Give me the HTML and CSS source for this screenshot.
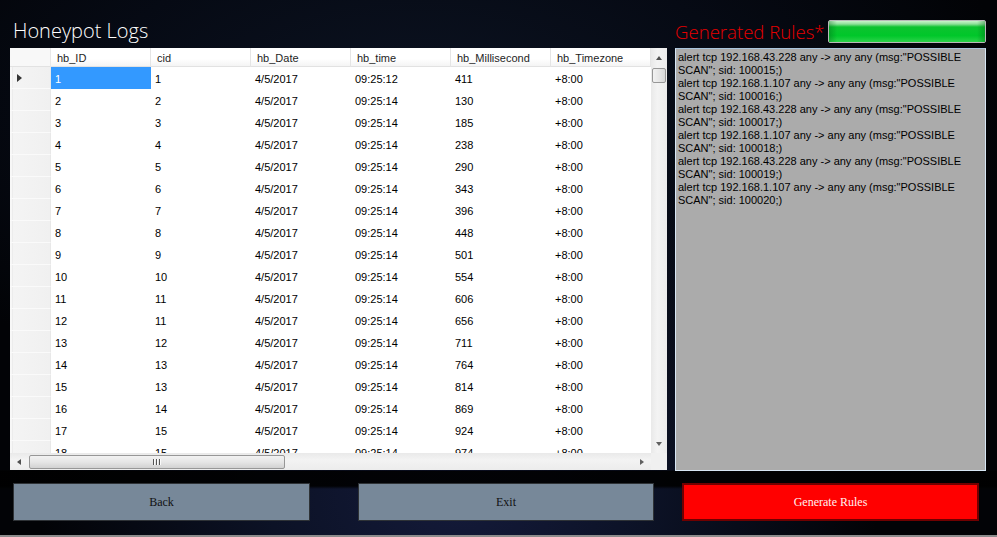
FILE: index.html
```html
<!DOCTYPE html>
<html>
<head>
<meta charset="utf-8">
<link rel="stylesheet" href="styles.css">
</head>
<body>
<div class="app">
  <div class="top">
    <div class="title">Honeypot Logs</div>
    <div class="rules-head">
      <div class="rules-title">Generated Rules*</div>
      <div class="progress"><div class="progress-fill"></div></div>
    </div>
  </div>
  <div class="main">
    <div class="grid">
      <div class="view">
        <div class="row head">
          <div class="rh"></div>
          <div class="c">hb_ID</div><div class="c">cid</div><div class="c">hb_Date</div><div class="c">hb_time</div><div class="c">hb_Millisecond</div><div class="c">hb_Timezone</div>
        </div>
        <div class="row"><div class="rh cur"><span class="tri"></span></div><div class="c sel">1</div><div class="c">1</div><div class="c">4/5/2017</div><div class="c">09:25:12</div><div class="c">411</div><div class="c">+8:00</div></div>
        <div class="row"><div class="rh"></div><div class="c">2</div><div class="c">2</div><div class="c">4/5/2017</div><div class="c">09:25:14</div><div class="c">130</div><div class="c">+8:00</div></div>
        <div class="row"><div class="rh"></div><div class="c">3</div><div class="c">3</div><div class="c">4/5/2017</div><div class="c">09:25:14</div><div class="c">185</div><div class="c">+8:00</div></div>
        <div class="row"><div class="rh"></div><div class="c">4</div><div class="c">4</div><div class="c">4/5/2017</div><div class="c">09:25:14</div><div class="c">238</div><div class="c">+8:00</div></div>
        <div class="row"><div class="rh"></div><div class="c">5</div><div class="c">5</div><div class="c">4/5/2017</div><div class="c">09:25:14</div><div class="c">290</div><div class="c">+8:00</div></div>
        <div class="row"><div class="rh"></div><div class="c">6</div><div class="c">6</div><div class="c">4/5/2017</div><div class="c">09:25:14</div><div class="c">343</div><div class="c">+8:00</div></div>
        <div class="row"><div class="rh"></div><div class="c">7</div><div class="c">7</div><div class="c">4/5/2017</div><div class="c">09:25:14</div><div class="c">396</div><div class="c">+8:00</div></div>
        <div class="row"><div class="rh"></div><div class="c">8</div><div class="c">8</div><div class="c">4/5/2017</div><div class="c">09:25:14</div><div class="c">448</div><div class="c">+8:00</div></div>
        <div class="row"><div class="rh"></div><div class="c">9</div><div class="c">9</div><div class="c">4/5/2017</div><div class="c">09:25:14</div><div class="c">501</div><div class="c">+8:00</div></div>
        <div class="row"><div class="rh"></div><div class="c">10</div><div class="c">10</div><div class="c">4/5/2017</div><div class="c">09:25:14</div><div class="c">554</div><div class="c">+8:00</div></div>
        <div class="row"><div class="rh"></div><div class="c">11</div><div class="c">11</div><div class="c">4/5/2017</div><div class="c">09:25:14</div><div class="c">606</div><div class="c">+8:00</div></div>
        <div class="row"><div class="rh"></div><div class="c">12</div><div class="c">11</div><div class="c">4/5/2017</div><div class="c">09:25:14</div><div class="c">656</div><div class="c">+8:00</div></div>
        <div class="row"><div class="rh"></div><div class="c">13</div><div class="c">12</div><div class="c">4/5/2017</div><div class="c">09:25:14</div><div class="c">711</div><div class="c">+8:00</div></div>
        <div class="row"><div class="rh"></div><div class="c">14</div><div class="c">13</div><div class="c">4/5/2017</div><div class="c">09:25:14</div><div class="c">764</div><div class="c">+8:00</div></div>
        <div class="row"><div class="rh"></div><div class="c">15</div><div class="c">13</div><div class="c">4/5/2017</div><div class="c">09:25:14</div><div class="c">814</div><div class="c">+8:00</div></div>
        <div class="row"><div class="rh"></div><div class="c">16</div><div class="c">14</div><div class="c">4/5/2017</div><div class="c">09:25:14</div><div class="c">869</div><div class="c">+8:00</div></div>
        <div class="row"><div class="rh"></div><div class="c">17</div><div class="c">15</div><div class="c">4/5/2017</div><div class="c">09:25:14</div><div class="c">924</div><div class="c">+8:00</div></div>
        <div class="row"><div class="rh"></div><div class="c">18</div><div class="c">15</div><div class="c">4/5/2017</div><div class="c">09:25:14</div><div class="c">974</div><div class="c">+8:00</div></div>
      </div>
      <div class="vscroll">
        <span class="arrow up"></span>
        <div class="vthumb"></div>
        <div class="vspace"></div>
        <span class="arrow down"></span>
      </div>
      <div class="hscroll">
        <span class="arrow left"></span>
        <div class="hthumb"><span class="grip"></span><span class="grip"></span><span class="grip"></span></div>
        <div class="hspace"></div>
        <span class="arrow right"></span>
      </div>
      <div class="corner"></div>
    </div>
    <div class="rules">alert tcp 192.168.43.228 any -&gt; any any (msg:"POSSIBLE
SCAN"; sid: 100015;)
alert tcp 192.168.1.107 any -&gt; any any (msg:"POSSIBLE
SCAN"; sid: 100016;)
alert tcp 192.168.43.228 any -&gt; any any (msg:"POSSIBLE
SCAN"; sid: 100017;)
alert tcp 192.168.1.107 any -&gt; any any (msg:"POSSIBLE
SCAN"; sid: 100018;)
alert tcp 192.168.43.228 any -&gt; any any (msg:"POSSIBLE
SCAN"; sid: 100019;)
alert tcp 192.168.1.107 any -&gt; any any (msg:"POSSIBLE
SCAN"; sid: 100020;)</div>
  </div>
  <div class="buttons">
    <button class="btn back">Back</button>
    <button class="btn exit">Exit</button>
    <button class="btn gen">Generate Rules</button>
  </div>
</div>
</body>
</html>
```

FILE: styles.css
```css
html, body {
  margin: 0;
  padding: 0;
  background: #000;
}
.app {
  width: 997px;
  height: 535px;
  border-bottom: 2px solid #8c8c8c;
  overflow: hidden;
  background:
    linear-gradient(to bottom, transparent 0, transparent 470px, rgba(0,0,0,0.9) 471px, rgba(0,0,0,0.9) 486px, transparent 489px),
    radial-gradient(ellipse 420px 360px at 46% 92%, #141a3a 0%, #0c1226 45%, rgba(6,9,18,0) 100%),
    radial-gradient(ellipse 600px 300px at 42% 20%, #0c1322 0%, #060a14 55%, #020306 100%);
  font-family: "Liberation Sans", Arial, sans-serif;
}
.top {
  height: 48px;
  display: flex;
  align-items: flex-end;
}
.title {
  width: 662px;
  padding-left: 13px;
  color: #fff;
  font-family: "Open Sans", sans-serif;
  font-weight: 300;
  font-size: 20px;
  line-height: 26px;
  padding-bottom: 4px;
}
.rules-head {
  display: flex;
  align-items: flex-end;
  padding-bottom: 5px;
}
.rules-title {
  color: #e60000;
  font-family: "Open Sans", sans-serif;
  font-weight: 300;
  font-size: 18.6px;
  line-height: 26px;
  width: 153px;
  margin-bottom: -2px;
  white-space: nowrap;
}
.progress {
  width: 156px;
  height: 21px;
  border: 1px solid #b9b9b9;
  background: #e6e6e6;
  border-radius: 2px;
}
.progress-fill {
  height: 100%;
  background:
    linear-gradient(to right, rgba(0,90,20,0.35) 0, rgba(0,0,0,0) 8px, rgba(0,0,0,0) calc(100% - 8px), rgba(0,90,20,0.35) 100%),
    linear-gradient(to bottom, #c8f4ca 0, #8fe09a 3px, #0cc32f 6px, #00c72a 70%, #2bd24a 100%);
}
.main {
  display: flex;
  padding-left: 10px;
  gap: 8px;
  height: 422px;
}
.grid {
  width: 657px;
  height: 422px;
  background: #fff;
  display: grid;
  grid-template-columns: 641px 16px;
  grid-template-rows: 405px 17px;
}
.view {
  overflow: hidden;
  font-size: 11px;
  color: #000;
}
.row {
  display: flex;
  height: 22px;
}
.row.head {
  height: 19px;
  background: #fff;
}
.rh {
  flex: none;
  background: linear-gradient(to right, #f7f7f7 0, #f7f7f7 2px, #e4e4e4 2px, #f4f4f4 3px, #f0f0f0 100%);
  border-right: 1px solid #e8e8e8;
  border-bottom: 1px solid #fafafa;
  box-sizing: border-box;
  width: 41px;
  display: flex;
  align-items: center;
}
.head .rh {
  background: #f8f8f8;
  border-bottom: 1px solid #e2e2e2;
}
.c {
  width: 100px;
  flex: none;
  box-sizing: border-box;
  padding-left: 4px;
  padding-top: 2px;
  line-height: 20px;
  white-space: nowrap;
}
.head .c {
  padding-left: 6px;
  padding-top: 1px;
  line-height: 18px;
  border-right: 1px solid #e5e5e5;
  border-bottom: 1px solid #e2e2e2;
  background: linear-gradient(to bottom, #ffffff 0, #ffffff 60%, #f4f4f4 100%);
  color: #1e1e1e;
}
.c.sel {
  background: #3399ff;
  color: #fff;
}
.tri {
  width: 0;
  height: 0;
  margin-left: 7px;
  border-top: 4.5px solid transparent;
  border-bottom: 4.5px solid transparent;
  border-left: 5px solid #333;
}
.vscroll {
  background: linear-gradient(to right, #e9e9e9, #f3f3f3 40%, #ececec);
  display: flex;
  flex-direction: column;
  align-items: center;
}
.arrow {
  width: 0;
  height: 0;
  flex: none;
}
.arrow.up {
  margin-top: 8px;
  margin-bottom: 8px;
  border-left: 3.5px solid transparent;
  border-right: 3.5px solid transparent;
  border-bottom: 4px solid #505050;
}
.arrow.down {
  margin-bottom: 7px;
  border-left: 3.5px solid transparent;
  border-right: 3.5px solid transparent;
  border-top: 4px solid #606060;
}
.vthumb {
  width: 14px;
  height: 15px;
  flex: none;
  box-sizing: border-box;
  border: 1px solid #979797;
  border-radius: 2px;
  background: linear-gradient(to right, #f2f2f2, #e6e6e6 50%, #d6d6d6);
}
.vspace, .hspace { flex: 1; }
.hscroll {
  background: linear-gradient(to bottom, #e9e9e9, #f3f3f3 40%, #ececec);
  display: flex;
  align-items: center;
}
.arrow.left {
  margin-left: 7px;
  margin-right: 8px;
  border-top: 3.5px solid transparent;
  border-bottom: 3.5px solid transparent;
  border-right: 4px solid #505050;
}
.arrow.right {
  margin-right: 7px;
  border-top: 3.5px solid transparent;
  border-bottom: 3.5px solid transparent;
  border-left: 4px solid #606060;
}
.hthumb {
  width: 256px;
  height: 14px;
  flex: none;
  box-sizing: border-box;
  border: 1px solid #979797;
  border-radius: 2px;
  background: linear-gradient(to bottom, #f2f2f2, #e6e6e6 50%, #d2d2d2);
  display: flex;
  justify-content: center;
  align-items: center;
  gap: 1px;
}
.grip {
  width: 1px;
  height: 6px;
  background: #555;
  border-right: 1px solid #fafafa;
}
.corner {
  background: #f0f0f0;
}
.rules {
  width: 311px;
  height: 423px;
  box-sizing: border-box;
  background: #ababab;
  border: 1px solid #d7e6f4;
  border-top-color: #a9c4dc;
  padding: 2px 2px;
  font-size: 11px;
  line-height: 13px;
  color: #000;
  white-space: pre;
  overflow: hidden;
}
.buttons {
  display: flex;
  padding-top: 13px;
  padding-left: 13px;
}
.btn {
  height: 38px;
  box-sizing: border-box;
  font-family: "Liberation Serif", serif;
  font-size: 12px;
  padding: 0;
  margin: 0;
  cursor: pointer;
}
.back, .exit {
  background: #778899;
  border: 1px solid #2e3236;
  color: #111;
}
.back {
  width: 297px;
}
.exit {
  width: 296px;
  margin-left: 48px;
}
.gen {
  width: 297px;
  margin-left: 28px;
  background: #ff0000;
  border: 2px solid #700000;
  color: #fff0f0;
}
```
